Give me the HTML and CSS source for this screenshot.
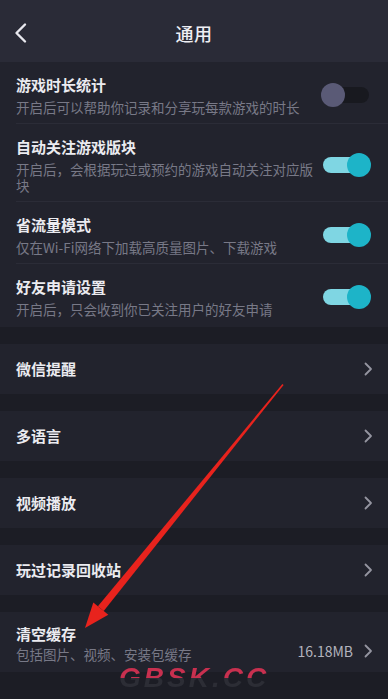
FILE: index.html
```html
<!DOCTYPE html>
<html lang="zh-CN">
<head>
<meta charset="utf-8">
<title>通用</title>
<link rel="stylesheet" href="styles.css">
</head>
<body>
<div class="page">
  <header class="header">
    <div class="back">
      <svg width="20" height="24" viewBox="0 0 20 24"><polyline points="12,3.5 3.5,12 12,20.5" fill="none" stroke="#e8e8ee" stroke-width="2.4" stroke-linecap="round" stroke-linejoin="round"/></svg>
    </div>
    <div class="title">通用</div>
    <div class="spacer"></div>
  </header>

  <section class="group">
    <div class="row toggle-row">
      <div class="text">
        <div class="name">游戏时长统计</div>
        <div class="desc">开启后可以帮助你记录和分享玩每款游戏的时长</div>
      </div>
      <div class="switch off"><span class="track"></span><span class="knob"></span></div>
    </div>
    <div class="row toggle-row">
      <div class="text">
        <div class="name">自动关注游戏版块</div>
        <div class="desc">开启后，会根据玩过或预约的游戏自动关注对应版块</div>
      </div>
      <div class="switch on"><span class="track"></span><span class="knob"></span></div>
    </div>
    <div class="row toggle-row">
      <div class="text">
        <div class="name">省流量模式</div>
        <div class="desc">仅在Wi-Fi网络下加载高质量图片、下载游戏</div>
      </div>
      <div class="switch on"><span class="track"></span><span class="knob"></span></div>
    </div>
    <div class="row toggle-row last">
      <div class="text">
        <div class="name">好友申请设置</div>
        <div class="desc">开启后，只会收到你已关注用户的好友申请</div>
      </div>
      <div class="switch on"><span class="track"></span><span class="knob"></span></div>
    </div>
  </section>

  <section class="group link">
    <div class="name">微信提醒</div>
    <svg class="chev" width="10" height="14" viewBox="0 0 10 14"><polyline points="2.5,1.5 8,7 2.5,12.5" fill="none" stroke="#9595a0" stroke-width="1.8" stroke-linecap="round" stroke-linejoin="round"/></svg>
  </section>
  <section class="group link">
    <div class="name">多语言</div>
    <svg class="chev" width="10" height="14" viewBox="0 0 10 14"><polyline points="2.5,1.5 8,7 2.5,12.5" fill="none" stroke="#9595a0" stroke-width="1.8" stroke-linecap="round" stroke-linejoin="round"/></svg>
  </section>
  <section class="group link">
    <div class="name">视频播放</div>
    <svg class="chev" width="10" height="14" viewBox="0 0 10 14"><polyline points="2.5,1.5 8,7 2.5,12.5" fill="none" stroke="#9595a0" stroke-width="1.8" stroke-linecap="round" stroke-linejoin="round"/></svg>
  </section>
  <section class="group link">
    <div class="name">玩过记录回收站</div>
    <svg class="chev" width="10" height="14" viewBox="0 0 10 14"><polyline points="2.5,1.5 8,7 2.5,12.5" fill="none" stroke="#9595a0" stroke-width="1.8" stroke-linecap="round" stroke-linejoin="round"/></svg>
  </section>
  <section class="group cache">
    <div class="text">
      <div class="name">清空缓存</div>
      <div class="desc">包括图片、视频、安装包缓存</div>
    </div>
    <div class="size">16.18MB</div>
    <svg class="chev" width="10" height="14" viewBox="0 0 10 14"><polyline points="2.5,1.5 8,7 2.5,12.5" fill="none" stroke="#9595a0" stroke-width="1.8" stroke-linecap="round" stroke-linejoin="round"/></svg>
  </section>

  <svg class="arrow" width="388" height="699" viewBox="0 0 388 699">
    <polygon points="283.6,384.9 282.4,384.1 97.9,606.2 103.7,611.0" fill="#e8231d"/>
    <polygon points="85,628 93.3,602.5 108.3,614.7" fill="#e8231d"/>
  </svg>
  <div class="watermark">GBSK.CC</div>
</div>
</body>
</html>
```
FILE: styles.css
```css
* { box-sizing: border-box; }
html, body { margin: 0; padding: 0; }
body {
  background: #1c1d25;
  font-family: "Noto Sans CJK SC", "Noto Sans", sans-serif;
  color: #ebebf0;
}
.page {
  position: relative;
  width: 388px;
  height: 699px;
  overflow: hidden;
  background: #1c1d25;
}
.header {
  height: 62px;
  background: #2a2b37;
  display: grid;
  grid-template-columns: 48px 1fr 48px;
  align-items: center;
  padding-top: 4px;
}
.back { padding-left: 13px; display: flex; align-items: center; }
.title {
  text-align: center;
  font-size: 18px;
  font-weight: 500;
  color: #efeff4;
  letter-spacing: 0.5px;
}
.group {
  background: #22232d;
}
.group + .group { margin-top: 17px; }
.row {
  margin-left: 16px;
  padding-right: 17px;
  display: flex;
  align-items: center;
  border-bottom: 1px solid #2b2c37;
}
.row.last { border-bottom: none; }
.toggle-row { padding-top: 13px; padding-bottom: 8px; }
.toggle-row.last { padding-bottom: 10px; }
.text { flex: 1; min-width: 0; }
.toggle-row .text { max-width: 300px; }
.name {
  font-size: 15px;
  font-weight: 700;
  line-height: 20px;
  color: #ebebf0;
}
.desc {
  margin-top: 4px;
  font-size: 13.5px;
  line-height: 16px;
  color: #787987;
}
.switch {
  position: relative;
  width: 50px;
  height: 24px;
  margin-left: auto;
  flex: none;
}
.switch .track {
  position: absolute;
  left: 2px;
  right: 2px;
  top: 4px;
  height: 16px;
  border-radius: 8px;
}
.switch .knob {
  position: absolute;
  top: 0;
  width: 24px;
  height: 24px;
  border-radius: 50%;
}
.switch.off .track { background: #18191f; left: 4px; }
.switch.off .knob { left: 0; background: #5a5a76; }
.switch.on .track { background: #7fd6e3; }
.switch.on .knob { right: 0; background: #1db4c8; }

.link {
  height: 50px;
  display: flex;
  align-items: center;
  padding: 0 15px 0 16px;
}
.link .name { flex: 1; }
.chev { flex: none; }
.cache {
  height: 60px;
  display: flex;
  align-items: center;
  padding: 2px 15px 0 16px;
}
.cache .desc { margin-top: 2px; }
.size {
  font-size: 14px;
  color: #b3b3bd;
  margin-right: 10px;
  margin-top: 16px;
}
.cache .chev { margin-top: 16px; }
.arrow {
  position: absolute;
  left: 0;
  top: 0;
  pointer-events: none;
}
.watermark {
  position: absolute;
  left: 119px;
  top: 664px;
  font-family: "Liberation Sans", sans-serif;
  font-size: 28px;
  font-weight: 700;
  font-style: italic;
  letter-spacing: 3px;
  line-height: 28px;
  background: linear-gradient(to bottom, #c8304f 0%, #c8304f 50%, #2c2d35 50%, #2c2d35 100%);
  -webkit-background-clip: text;
  background-clip: text;
  color: transparent;
}
```
